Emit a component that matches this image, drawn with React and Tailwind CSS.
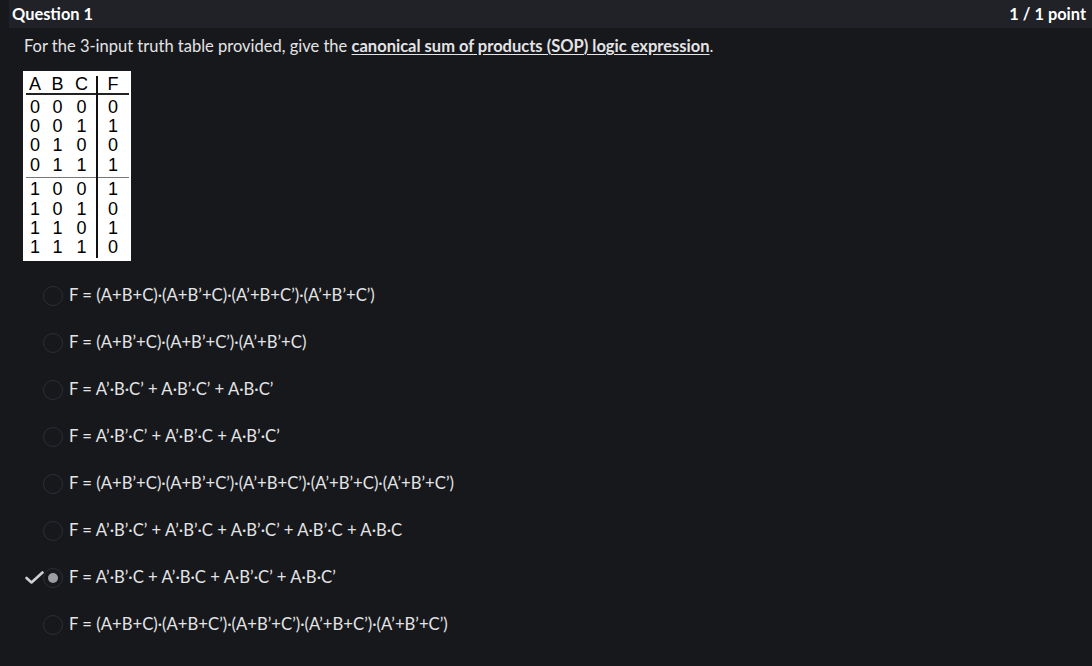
import React from "react";

const rows = [
  ["0", "0", "0", "0"],
  ["0", "0", "1", "1"],
  ["0", "1", "0", "0"],
  ["0", "1", "1", "1"],
  ["1", "0", "0", "1"],
  ["1", "0", "1", "0"],
  ["1", "1", "0", "1"],
  ["1", "1", "1", "0"],
];

const options = [
  "F = (A+B+C)·(A+B’+C)·(A’+B+C’)·(A’+B’+C’)",
  "F = (A+B’+C)·(A+B’+C’)·(A’+B’+C)",
  "F = A’·B·C’ + A·B’·C’ + A·B·C’",
  "F = A’·B’·C’ + A’·B’·C + A·B’·C’",
  "F = (A+B’+C)·(A+B’+C’)·(A’+B+C’)·(A’+B’+C)·(A’+B’+C’)",
  "F = A’·B’·C’ + A’·B’·C + A·B’·C’ + A·B’·C + A·B·C",
  "F = A’·B’·C + A’·B·C + A·B’·C’ + A·B·C’",
  "F = (A+B+C)·(A+B+C’)·(A+B’+C’)·(A’+B+C’)·(A’+B’+C’)",
];

function Row({ r }) {
  return (
    <div className="flex h-[19.4px] items-center leading-none">
      <span className="w-[22px] text-center">{r[0]}</span>
      <span className="w-[23px] text-center">{r[1]}</span>
      <span className="w-[25px] text-center">{r[2]}</span>
      <span className="w-[4px]" />
      <span className="w-[30px] text-center">{r[3]}</span>
    </div>
  );
}

function TruthTable() {
  return (
    <div
      className="relative w-[108px] h-[190px] bg-white text-black text-[18px] pl-[1px]"
      style={{ fontFamily: '"Liberation Sans", Arial, sans-serif' }}
    >
      <div className="absolute left-[73px] top-[5px] bottom-[3px] w-[2px] bg-[#111]" />
      <div className="flex h-[22px] pt-[3px] items-center leading-none">
        <span className="w-[22px] text-center">A</span>
        <span className="w-[23px] text-center">B</span>
        <span className="w-[25px] text-center">C</span>
        <span className="w-[4px]" />
        <span className="w-[30px] text-center">F</span>
      </div>
      <div className="mx-[2px] h-[2px] bg-[#222]" />
      <div className="pt-[2px]">
        {rows.slice(0, 4).map((r, i) => (
          <Row key={i} r={r} />
        ))}
      </div>
      <div className="mx-[2px] my-[2px] h-[1px] bg-[#777]" />
      <div>
        {rows.slice(4).map((r, i) => (
          <Row key={i} r={r} />
        ))}
      </div>
    </div>
  );
}

export default function App() {
  return (
    <div
      className="w-[1092px] h-[666px] bg-[#17181c] text-[#e4e4e6] overflow-hidden"
      style={{ fontFamily: 'Lato, "Noto Sans", sans-serif' }}
    >
      <div className="ml-[9px] h-[28px] bg-[#202228] flex items-center justify-between pl-[3px] pr-[6px]">
        <span className="text-[16.4px] font-bold text-white">Question 1</span>
        <span className="text-[16.4px] font-bold text-white">1 / 1 point</span>
      </div>
      <div className="pl-[24px] pt-[7px]">
        <p className="text-[16.5px] leading-[22px]">
          For the 3-input truth table provided, give the{" "}
          <span className="font-bold underline underline-offset-2">
            canonical sum of products (SOP) logic expression
          </span>
          .
        </p>
        <div className="mt-[14px] ml-[-1px]">
          <TruthTable />
        </div>
        <div className="mt-[11px] flex flex-col">
          {options.map((o, i) => {
            const checked = i === 6;
            return (
              <div key={i} className="relative flex items-center h-[47px]">
                {checked && (
                  <svg
                    className="absolute left-[1px] top-[17px]"
                    width="19"
                    height="13"
                    viewBox="0 0 19 13"
                  >
                    <path
                      d="M1.5 7 L6.5 11.5 L17.5 1.5"
                      fill="none"
                      stroke="#cfd0d3"
                      strokeWidth="2.6"
                      strokeLinecap="round"
                      strokeLinejoin="round"
                    />
                  </svg>
                )}
                <div className="ml-[19px] w-[20px] h-[20px] rounded-full border-[1.5px] border-[#2c2e35] flex items-center justify-center">
                  {checked && (
                    <div className="w-[10px] h-[10px] rounded-full bg-[#9b9da3]" />
                  )}
                </div>
                <span className="ml-[6px] text-[16.7px]">{o}</span>
              </div>
            );
          })}
        </div>
      </div>
    </div>
  );
}
